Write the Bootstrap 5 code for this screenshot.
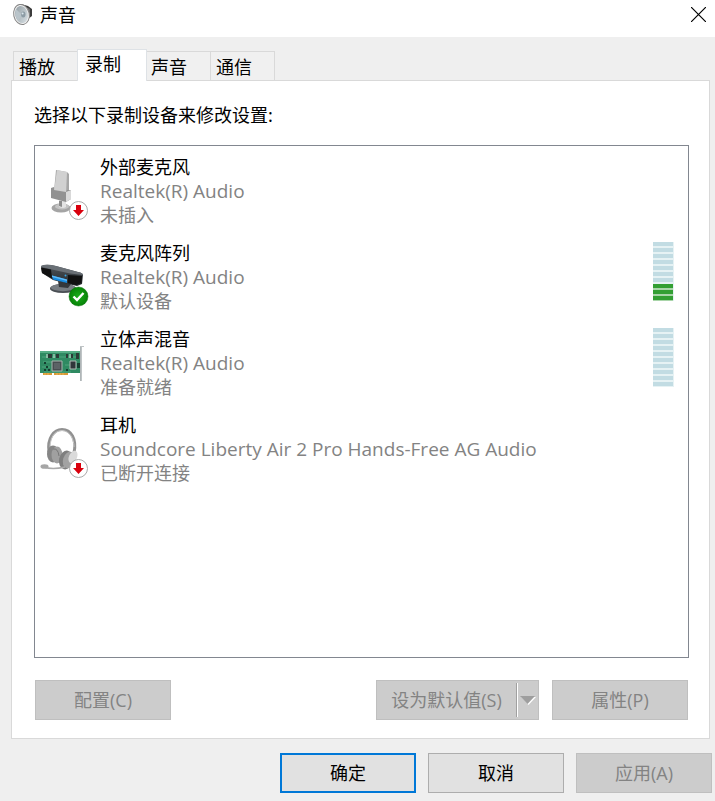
<!DOCTYPE html>
<html lang="zh-CN">
<head>
<meta charset="utf-8">
<meta name="viewport" content="width=device-width, initial-scale=1">
<title>声音</title>
<link href="https://cdn.jsdelivr.net/npm/bootstrap@5.3.0/dist/css/bootstrap.min.css" rel="stylesheet">
<style>
body{font-family:"Noto Sans","Noto Sans CJK SC",sans-serif;font-size:18px;line-height:24px;color:#000;background:#efefef}
.titlebar{height:37px;padding:0 9px 8px 12px}
.titlebar h1{font-size:18px;line-height:24px;font-weight:400;margin:0 0 0 6px}
.close-btn{line-height:0}
.dialog-body{padding:12px 5px 0 11px}
.sheet-tabs{border:0;padding-left:2px}
.sheet-tabs .nav-link{border:1px solid #d9d9d9;border-right-width:0;border-bottom:0;border-radius:0;color:#000;background:#f0f0f0;height:29px;padding:2px 22px 0 5px;margin:0;text-align:left;line-height:24px}
.sheet-tabs .nav-item:last-child .nav-link{border-right-width:1px}
.sheet-tabs .nav-item:nth-child(3) .nav-link{border-left-width:0;padding:2px 23px 0 4px}
.sheet-tabs .nav-link.active{background:#fff;color:#000;height:32px;margin-bottom:-1px;padding:0 25px 3px 7px;border-right-width:1px;position:relative}
.sheet{background:#fff;border:1px solid #d9d9d9;padding:22px 20px 18px 22px}
.device-list{border:1px solid #828790;padding:9px 14px 10px 5px;gap:14px;margin-top:18px}
.device{gap:12px}
.device-icon{width:48px;height:48px;margin-top:17px;flex:none;overflow:visible}
.sub{color:#838383}
.sub.maker{font-family:"Open Sans","Noto Sans",sans-serif;font-size:19px}
.level{width:21px;gap:2px;margin-top:1px;padding-bottom:1px;background:#e6f2f4;align-self:flex-start}
.level span{height:4px;background:#c2dce3;margin-right:1px}
.level .on{background:#339f33;box-shadow:0 2px #a9d5a9}
.level .on:last-child{box-shadow:0 1px #a9d5a9}
.dlg-btn{font-family:"Open Sans","Noto Sans CJK SC",sans-serif;width:136px;height:40px;padding:0;border:1px solid #adadad;border-radius:0;background:#e1e1e1;color:#000;font-size:18px;line-height:24px}
.dlg-btn:disabled{background:#ccc;border-color:#bfbfbf;color:#838383;opacity:1}
.dlg-btn.default{border:2px solid #0078d7}
.split{width:163px;background:#ccc;border:1px solid #bfbfbf;height:40px}
.split .dlg-btn{border:0;height:38px}
.split .main{flex:1}
.split .drop{width:20px;flex:none;line-height:0}
.split .rule{width:2px;margin:2px 0;background:#a0a0a0;border-right:1px solid #fff}
.sheet-actions{padding:22px 1px 0;gap:13px}
.footer-actions{padding:14px 3px 8px;gap:12px}
</style>
</head>
<body class="min-vh-100 d-flex flex-column">
<header class="titlebar bg-white d-flex align-items-center">
  <svg width="22" height="24" viewBox="0 0 22 24" aria-hidden="true">
    <defs><linearGradient id="cone" x1="0" y1="0" x2="1" y2="1"><stop offset="0" stop-color="#8e999f"/><stop offset="1" stop-color="#dce4e8"/></linearGradient></defs>
    <path d="M9 1 16 3 20 6V13L16 16 13 20Z" fill="#3c3c3c"/>
    <path d="M14 4 18 6V11L15 15Z" fill="#6f6f6f"/>
    <ellipse cx="9.500" cy="11.500" rx="7.800" ry="10.200" fill="#eee" stroke="#858585" transform="rotate(-12 9.500 11.500)"/>
    <ellipse cx="9.500" cy="11.500" rx="6.300" ry="8.700" fill="url(#cone)" transform="rotate(-12 9.500 11.500)"/>
    <path d="M10 12 4 6 3 12 6 18Z" fill="#b9c4ca"/>
    <ellipse cx="11.300" cy="11.500" rx="2.200" ry="3" fill="#8d9ca5"/><circle cx="10.600" cy="10.500" r="1" fill="#dde8ee"/>
  </svg>
  <h1 class="flex-grow-1">声音</h1>
  <button type="button" class="close-btn border-0 bg-transparent p-0" aria-label="关闭">
    <svg width="15" height="15" viewBox="0 0 15 15"><path d="M0 0 15 15M15 0 0 15" stroke="#000" stroke-width="1.200"/></svg>
  </button>
</header>

<main class="dialog-body flex-grow-1 d-flex flex-column">
  <ul class="nav nav-tabs sheet-tabs align-items-end flex-nowrap" role="tablist">
    <li class="nav-item"><button class="nav-link" type="button" role="tab">播放</button></li>
    <li class="nav-item"><button class="nav-link active" type="button" role="tab" aria-selected="true">录制</button></li>
    <li class="nav-item"><button class="nav-link" type="button" role="tab">声音</button></li>
    <li class="nav-item"><button class="nav-link" type="button" role="tab">通信</button></li>
  </ul>
  <section class="sheet flex-grow-1 d-flex flex-column">
    <p class="mb-0">选择以下录制设备来修改设置:</p>
    <ul class="device-list list-unstyled mb-0 flex-grow-1 d-flex flex-column">
      <li class="device d-flex">
        <svg class="device-icon" viewBox="0 0 48 48" aria-hidden="true">
          <ellipse cx="21" cy="36" rx="9.500" ry="4.500" fill="#a4a4a4"/><ellipse cx="22" cy="34.500" rx="7" ry="3" fill="#c4c4c4"/>
          <path d="M19 27h7v8q-3 2-7 0Z" fill="#e3e3e3"/><path d="M19 29h3v6l-3-1Z" fill="#8c8c8c"/>
          <path d="M16-2 27 0 29 2V22L14 19Z" fill="#a7a7a7"/><path d="M17-2 27 0 26 22 14 19Z" fill="#d1d1d1"/>
          <path d="M11 16 14 15V18L26 20 27 18H31V27L26 30 11 26Z" fill="#929292"/><path d="M26 20 31 18V27L26 30Z" fill="#d9d9d9"/>
          <circle cx="38.500" cy="38.500" r="9" fill="#fff" stroke="#aaa"/><path d="M36 33h5v5h3l-5.500 6-5.500-6h3Z" fill="#d9000d"/>
        </svg>
        <div class="flex-grow-1"><div>外部麦克风</div><div class="sub maker">Realtek(R) Audio</div><div class="sub">未插入</div></div>
      </li>
      <li class="device d-flex">
        <svg class="device-icon" viewBox="0 0 48 48" aria-hidden="true">
          <defs><linearGradient id="barg" x1="0" y1="0" x2="0" y2="1"><stop offset="0" stop-color="#50565c"/><stop offset="1" stop-color="#23272b"/></linearGradient>
          <radialGradient id="okg"><stop offset="0" stop-color="#1bae1b"/><stop offset="1" stop-color="#078307"/></radialGradient></defs>
          <ellipse cx="23" cy="30.500" rx="13" ry="4.500" fill="#4a4f54"/><ellipse cx="23" cy="29.500" rx="12" ry="3.700" fill="#777d83"/>
          <path d="M18 23 31 26 28 30 19 29Z" fill="#34383c"/>
          <path d="M1 8Q6 5.500 16 8L38 14Q43 15 43 17L42 26 37 28 28 26 13 22 2 15Z" fill="url(#barg)"/>
          <path d="M1 8Q6 5.500 16 8L38 14Q43 15 43 17L30 15.500 12 11.500 1 9Z" fill="#6a7076"/>
          <path d="M1 9.500 11 11.500 12 20.500 2 15Z" fill="#111"/><path d="M28 17 42 18 41.500 25 36 27 28 25Z" fill="#111"/>
          <path d="M12 17.500 27 21.500 27 25 13 21.500Z" fill="#188be0"/><path d="M12 17.500 27 21.500V23L12 19Z" fill="#61baf6"/><circle cx="25.500" cy="17.500" r="1" fill="#39a2df"/>
          <circle cx="38.500" cy="38.500" r="9.500" fill="url(#okg)" stroke="#08720b" stroke-width=".5"/><path d="m33.500 38.500 3.500 3.500 6.500-7" fill="none" stroke="#fff" stroke-width="2.400"/>
        </svg>
        <div class="flex-grow-1"><div>麦克风阵列</div><div class="sub maker">Realtek(R) Audio</div><div class="sub">默认设备</div></div>
        <div class="level d-flex flex-column" role="meter" aria-label="麦克风阵列" aria-valuemin="0" aria-valuemax="10" aria-valuenow="3"><span></span><span></span><span></span><span></span><span></span><span></span><span></span><span class="on"></span><span class="on"></span><span class="on"></span></div>
      </li>
      <li class="device d-flex">
        <svg class="device-icon" viewBox="0 0 48 48" aria-hidden="true">
          <path d="M0 7H40V29H0Z" fill="#2f8a62"/><path d="M0 7H40V9H0Z" fill="#56ad85"/>
          <path d="M3 29H12V31H3ZM14 29H28V31H14Z" fill="#d99a36"/><path d="M5 29v2M8 29v2M17 29v2M20 29v2M23 29v2" stroke="#f1c872" stroke-width=".6"/>
          <path d="M2 13h36M3 18h9M4 28h27M25 21h5M2 23h8" stroke="#62b891" stroke-width=".6"/>
          <path d="M12 17H22V27H12Z" fill="#484e51" stroke="#a9b5af"/><path d="M14 19H20V25H14Z" fill="#5c6366"/>
          <path d="M30 17H36V25H30Z" fill="#30363a" stroke="#b0bcb5"/>
          <path d="M8 10h4v4H8ZM16 10h3v4h-3ZM26 10h2v4h-2ZM31 10h2v4h-2ZM36 9h3v6h-3Z" fill="#2b3a36"/><path d="M7 10v4M14 10v4M30 10v4" stroke="#d5e5db"/>
          <path d="M4 18h2v2H4ZM6 22h2v2H6ZM4 25h2v2H4ZM8 25h2v2H8ZM26 25h2v2h-2ZM37 19h3v5h-3Z" fill="#153f30"/>
          <path d="M40 2H44V3H42V37H40Z" fill="#bfc4c6"/><path d="M40.500 3V37" stroke="#b0b6b8"/>
        </svg>
        <div class="flex-grow-1"><div>立体声混音</div><div class="sub maker">Realtek(R) Audio</div><div class="sub">准备就绪</div></div>
        <div class="level d-flex flex-column" role="meter" aria-label="立体声混音" aria-valuemin="0" aria-valuemax="10" aria-valuenow="0"><span></span><span></span><span></span><span></span><span></span><span></span><span></span><span></span><span></span><span></span></div>
      </li>
      <li class="device d-flex">
        <svg class="device-icon" viewBox="0 0 48 48" aria-hidden="true">
          <path d="M9 22C7 8 14-.5 22-.5 31-.5 37 9 34 23" fill="none" stroke="#919191" stroke-width="3"/><path d="M10 18C10 7 15 .5 22 .5 29 .5 34 8 34 17" fill="none" stroke="#c8c8c8"/>
          <ellipse cx="13" cy="24" rx="6" ry="8.500" fill="#858585"/><ellipse cx="17" cy="25" rx="5.500" ry="8.500" fill="#a0a0a0"/><path d="M13 19Q18 18 19 26" stroke="#777" fill="none"/>
          <ellipse cx="26" cy="30" rx="7" ry="9.500" fill="#7f7f7f" transform="rotate(12 26 30)"/><ellipse cx="29" cy="30" rx="6" ry="8.500" fill="#a2a2a2" transform="rotate(18 29 30)"/><ellipse cx="33" cy="27" rx="4" ry="6.500" fill="#dadada" transform="rotate(25 33 27)"/>
          <path d="M4 37Q12 40 25 37" fill="none" stroke="#aaa" stroke-width="1.500"/><ellipse cx="4.500" cy="36.500" rx="4" ry="2.300" fill="#a6a6a6"/>
          <circle cx="38.500" cy="38.500" r="9" fill="#fff" stroke="#aaa"/><path d="M36 33h5v5h3l-5.500 6-5.500-6h3Z" fill="#d9000d"/>
        </svg>
        <div class="flex-grow-1"><div>耳机</div><div class="sub maker">Soundcore Liberty Air 2 Pro Hands-Free AG Audio</div><div class="sub">已断开连接</div></div>
      </li>
    </ul>
    <div class="sheet-actions d-flex">
      <button class="btn dlg-btn me-auto" type="button" disabled>配置(C)</button>
      <div class="split d-flex">
        <button class="btn dlg-btn main" type="button" disabled>设为默认值(S)</button>
        <span class="rule"></span>
        <button class="btn dlg-btn drop" type="button" disabled aria-label="更多默认值选项"><svg width="16" height="9" viewBox="0 0 16 9"><path d="M1 1H16L8.500 9Z" fill="#fff"/><path d="M0 0H15L7.500 8Z" fill="#9e9e9e"/></svg></button>
      </div>
      <button class="btn dlg-btn" type="button" disabled>属性(P)</button>
    </div>
  </section>
</main>
<footer class="footer-actions d-flex justify-content-end">
  <button class="btn dlg-btn default" type="button">确定</button>
  <button class="btn dlg-btn" type="button">取消</button>
  <button class="btn dlg-btn" type="button" disabled>应用(A)</button>
</footer>
<script src="https://cdn.jsdelivr.net/npm/bootstrap@5.3.0/dist/js/bootstrap.bundle.min.js"></script>
</body>
</html>
